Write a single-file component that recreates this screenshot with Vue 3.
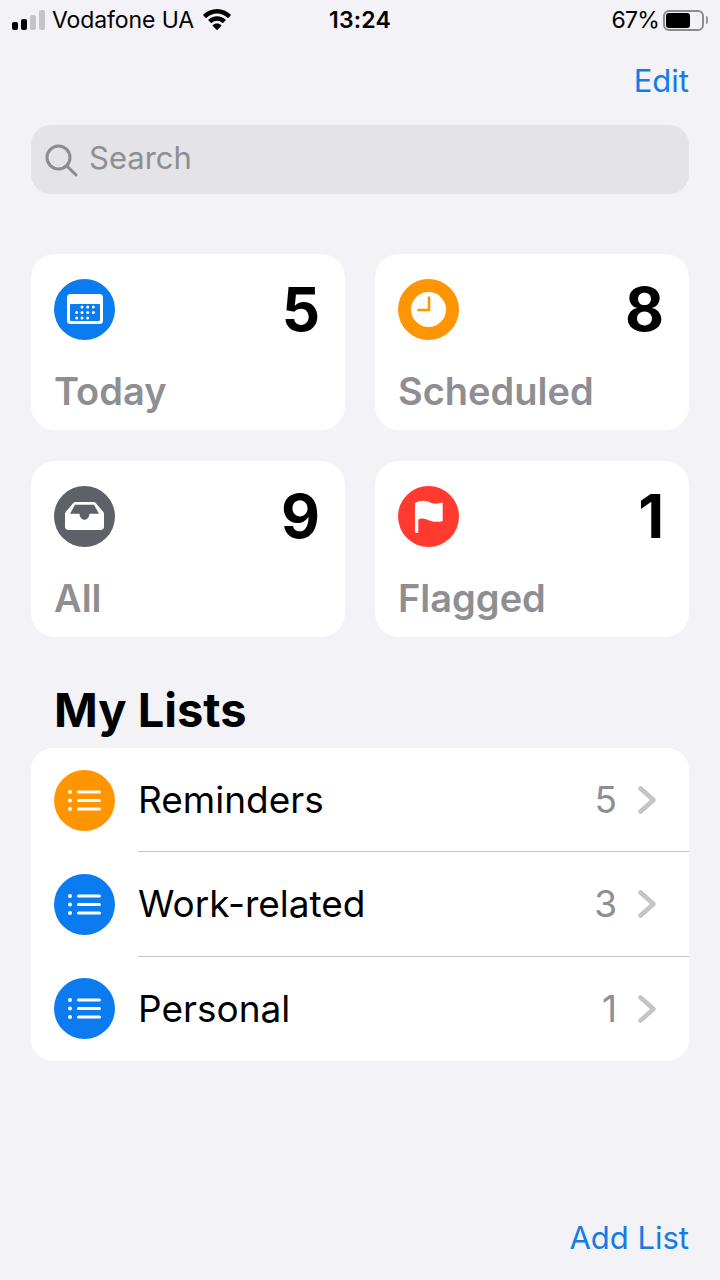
<template>
  <div class="screen">
    <!-- status bar -->
    <div class="status">
      <div class="status-left">
        <div class="signal">
          <i class="on" style="height: 8px"></i>
          <i class="on" style="height: 11px"></i>
          <i style="height: 15px"></i>
          <i style="height: 20px"></i>
        </div>
        <span class="carrier">Vodafone UA</span>
        <svg class="wifi" width="28" height="21" viewBox="0 0 28 21" fill="#000">
          <path d="M14 0C8.700 0 3.900 2.100.4 5.500C.1 5.800.1 6.200.4 6.500L2.600 8.800C2.900 9.100 3.300 9.100 3.600 8.800C6.300 6.200 10 4.500 14 4.500s7.700 1.700 10.400 4.300C24.700 9.100 25.100 9.100 25.400 8.800L27.600 6.500C27.900 6.200 27.900 5.800 27.600 5.500C24.100 2.100 19.300 0 14 0z" />
          <path d="M14 7.200c-3.300 0-6.300 1.300-8.500 3.300-.3.300-.3.700 0 1l2.300 2.300c.3.300.7.300 1 0C10.200 12.500 12 11.700 14 11.700s3.800.8 5.200 2.100c.3.300.7.300 1 0l2.300-2.300c.3-.3.3-.7 0-1C20.300 8.500 17.300 7.200 14 7.200z" />
          <path d="M14 14.500c-1.700 0-3.100.6-4.200 1.600-.3.300-.3.700 0 1l3.700 3.600c.3.300.7.300 1 0l3.700-3.600c.3-.3.3-.7 0-1C17.100 15.100 15.700 14.500 14 14.500z" />
        </svg>
      </div>
      <span class="clock">13:24</span>
      <div class="status-right">
        <span class="percent">67%</span>
        <div class="battery"><div class="battery-fill"></div></div>
        <div class="battery-cap"></div>
      </div>
    </div>

    <div class="nav"><span class="link">Edit</span></div>

    <div class="search">
      <svg width="34" height="34" viewBox="0 0 34 34" fill="none" stroke="#8b8b90" stroke-width="3">
        <circle cx="14.500" cy="14.500" r="11.500" />
        <path d="M23 23l9 9" stroke-linecap="round" />
      </svg>
      <span class="search-text">Search</span>
    </div>

    <div class="cards">
      <div v-for="card in cards" :key="card.name" class="card">
        <div class="card-top">
          <div class="circle" :class="card.color">
            <svg v-if="card.name === 'Today'" width="36" height="30" viewBox="0 0 36 30">
              <rect width="36" height="30" rx="3.500" fill="#fff" />
              <rect x="3" y="10" width="30" height="17" rx="1" fill="#0a7cf0" />
              <circle v-for="d in calendarDots" :key="d[0] + '-' + d[1]" :cx="d[0]" :cy="d[1]" r="1.500" fill="#fff" />
            </svg>
            <svg v-else-if="card.name === 'Scheduled'" width="35" height="35" viewBox="0 0 35 35">
              <circle cx="17.500" cy="17.500" r="17.500" fill="#fff" />
              <path d="M18 5.500V18H7.500" fill="none" stroke="#ff9500" stroke-width="2.600" stroke-linecap="round" />
            </svg>
            <svg v-else-if="card.name === 'All'" width="39" height="28" viewBox="0 0 39 28">
              <path d="M10.500 0H28.500C29.500 0 30.300.4 30.900 1.200L38 9.500C38.700 10.300 39 11.200 39 12.200V24.500C39 26.800 37.800 28 35.500 28H3.500C1.200 28 0 26.800 0 24.500V12.200C0 11.200.3 10.300 1 9.500L8.100 1.200C8.700.4 9.500 0 10.500 0z" />
              <path class="tray" d="M10 2.800H29L34 11.700H24.500C24.300 15.200 22.300 17.700 19.500 17.700S14.700 15.200 14.500 11.700H5z" />
            </svg>
            <svg v-else width="28" height="33" viewBox="0 0 28 33">
              <path d="M0 3C4 .5 9 0 13 1.500C18 4.500 23 4 27.700 2.500V21C23 22.500 18 22 13 20C9 18.500 6 18 3.300 19.500V31.400C3.300 32.300 2.600 33 1.650 33S0 32.300 0 31.400z" fill="#fff" />
            </svg>
          </div>
          <span class="count">{{ card.count }}</span>
        </div>
        <span class="card-label">{{ card.name }}</span>
      </div>
    </div>

    <h2 class="title">My Lists</h2>

    <div class="lists">
      <div v-for="item in lists" :key="item.name" class="row">
        <div class="circle" :class="item.color">
          <svg width="33" height="21" viewBox="0 0 33 21" fill="#fff">
            <circle cx="2" cy="2" r="2" />
            <circle cx="2" cy="10.500" r="2" />
            <circle cx="2" cy="19" r="2" />
            <rect x="9" y=".4" width="24" height="3.200" rx="1.600" />
            <rect x="9" y="8.900" width="24" height="3.200" rx="1.600" />
            <rect x="9" y="17.400" width="24" height="3.200" rx="1.600" />
          </svg>
        </div>
        <div class="row-body">
          <span class="row-name">{{ item.name }}</span>
          <span class="row-count">{{ item.count }}</span>
          <svg class="chevron" width="18" height="28" viewBox="0 0 18 28" fill="none" stroke="#c4c4c7" stroke-width="4.500" stroke-linecap="round" stroke-linejoin="round">
            <path d="M2.500 2.500l13 11.500-13 11.500" />
          </svg>
        </div>
      </div>
    </div>

    <div class="footer"><span class="link">Add List</span></div>
  </div>
</template>

<script setup>
const cards = [
  { name: 'Today', count: 5, color: 'blue' },
  { name: 'Scheduled', count: 8, color: 'orange' },
  { name: 'All', count: 9, color: 'gray' },
  { name: 'Flagged', count: 1, color: 'red' },
]

const lists = [
  { name: 'Reminders', count: 5, color: 'orange' },
  { name: 'Work-related', count: 3, color: 'blue' },
  { name: 'Personal', count: 1, color: 'blue' },
]

// dots of the little calendar, three rows
const calendarDots = [
  [15, 13], [20.700, 13], [26.300, 13],
  [9.700, 18.500], [15, 18.500], [20.700, 18.500], [26.300, 18.500],
  [9.700, 24], [15, 24], [20.700, 24],
]
</script>

<style>
body {
  margin: 0;
  background: #f2f2f7;
}
</style>

<style scoped>
.screen {
  width: 720px;
  height: 1280px;
  box-sizing: border-box;
  background: #f2f2f7;
  font-family: Inter, "Liberation Sans", sans-serif;
  display: flex;
  flex-direction: column;
  overflow: hidden;
  color: #000;
}

.status {
  height: 40px;
  display: grid;
  grid-template-columns: 1fr auto 1fr;
  align-items: center;
  padding: 0 12px;
  font-size: 23px;
}

.status-left,
.status-right {
  display: flex;
  align-items: center;
}

.status-right {
  justify-content: flex-end;
}

.signal {
  display: flex;
  align-items: flex-end;
  gap: 3px;
  height: 20px;
  margin-right: 7px;
}

.signal i {
  display: block;
  width: 6px;
  border-radius: 2px;
  background: #c4c4c8;
}

.signal i.on {
  background: #000;
}

.carrier {
  letter-spacing: -0.1px;
}

.wifi {
  margin-left: 9px;
  margin-top: -2px;
}

.clock {
  font-weight: 600;
  letter-spacing: 0.2px;
}

.percent {
  margin-right: 4px;
  letter-spacing: -0.8px;
}

.battery {
  width: 41px;
  height: 21px;
  box-sizing: border-box;
  border: 2px solid #8b8b8f;
  border-radius: 6px;
  padding: 1px;
}

.battery-fill {
  width: 24px;
  height: 15px;
  background: #000;
  border-radius: 3px;
}

.battery-cap {
  width: 2px;
  height: 8px;
  margin-left: 2px;
  background: #9a9a9e;
  border-radius: 0 2px 2px 0;
}

.nav {
  height: 85px;
  box-sizing: border-box;
  padding: 20px 31px 0;
  text-align: right;
}

.link {
  font-size: 31px;
  line-height: 42px;
  color: #147ce5;
}

.search {
  height: 69px;
  margin: 0 31px;
  padding: 0 13px;
  display: flex;
  align-items: center;
  gap: 11px;
  background: #e3e3e8;
  border-radius: 20px;
}

.search-text {
  font-size: 31px;
  padding-bottom: 4px;
  color: #8e8e93;
}

.cards {
  margin: 60px 31px 0;
  display: grid;
  grid-template-columns: 1fr 1fr;
  gap: 31px 30px;
}

.card {
  height: 176px;
  box-sizing: border-box;
  padding: 24px 23px 0;
  background: #fff;
  border-radius: 24px;
  display: flex;
  flex-direction: column;
}

.card-top {
  display: flex;
  justify-content: space-between;
  align-items: center;
  height: 62px;
}

.circle {
  width: 61px;
  height: 61px;
  flex: none;
  border-radius: 50%;
  display: flex;
  align-items: center;
  justify-content: center;
}

.blue { background: #0a7cf0; }
.orange { background: #ff9500; }
.gray { background: #5e6268; }
.red { background: #ff3b30; }

.gray svg path { fill: #fff; }
.gray svg path.tray { fill: #5e6268; }

.count {
  font-size: 60px;
  font-weight: 700;
  line-height: 62px;
  margin-right: 2px;
}

.card-label {
  margin-top: 21px;
  font-size: 38px;
  line-height: 60px;
  font-weight: 600;
  color: #8e8e93;
}

.title {
  margin: 45px 0 0 54px;
  height: 66px;
  font-size: 47px;
  line-height: 56px;
  font-weight: 700;
}

.lists {
  margin: 0 31px;
  background: #fff;
  border-radius: 22px;
  overflow: hidden;
}

.row {
  height: 104.330px;
  padding-left: 23px;
  display: flex;
  align-items: center;
  gap: 23px;
}

.row-body {
  flex: 1;
  height: 100%;
  display: flex;
  align-items: center;
  padding-right: 33px;
  border-bottom: 1px solid #c6c6c8;
  box-sizing: border-box;
}

.row:last-child .row-body {
  border-bottom: none;
}

.row-name {
  flex: 1;
  font-size: 37px;
}

.row-count {
  font-size: 37px;
  color: #8e8e93;
  margin-right: 21px;
}

.footer {
  margin-top: auto;
  padding: 0 31px 21px;
  text-align: right;
}
</style>
